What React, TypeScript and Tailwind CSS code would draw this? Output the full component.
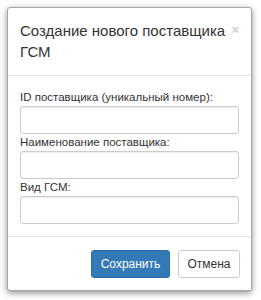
import React from 'react';

const fields = [
  'ID поставщика (уникальный номер):',
  'Наименование поставщика:',
  'Вид ГСМ:',
];

export default function App() {
  return (
    <div
      className="w-[261px] h-[300px] bg-white pt-[7px] pl-[7px]"
      style={{ fontFamily: '"Liberation Sans", Arial, sans-serif' }}
    >
      <div className="w-[245px] h-[284px] bg-white border border-[#a8a8a8] rounded-[3px] shadow-[0_2px_6px_rgba(0,0,0,0.45)] flex flex-col">
        <div className="relative pl-[12px] pr-[22px] pt-[12px] pb-[13px] border-b border-[#e5e5e5]">
          <h1 className="text-[15px] leading-[21px] text-[#333] font-normal">
            Создание нового поставщика ГСМ
          </h1>
          <span className="absolute right-[12px] top-[15px] text-[#cfcfcf] text-[13px] leading-[13px] font-bold">×</span>
        </div>

        <div className="px-[12px] pt-[14px] pb-[12px] flex flex-col gap-[1px] border-b border-[#e5e5e5]">
          {fields.map((label) => (
            <div key={label} className="flex flex-col">
              <label className="text-[11.5px] leading-[15px] text-[#333] mb-[1px]">{label}</label>
              <input
                type="text"
                className="h-[28px] w-full border border-[#ccc] rounded-[3px] shadow-[inset_0_1px_1px_rgba(0,0,0,0.075)]"
              />
            </div>
          ))}
        </div>

        <div className="flex justify-end gap-[8px] px-[11px] pt-[13px]">
          <button className="h-[28px] w-[79px] bg-[#337ab7] border border-[#2e6da4] rounded-[3px] text-white text-[12px]">
            Сохранить
          </button>
          <button className="h-[28px] w-[62px] bg-white border border-[#ccc] rounded-[3px] text-[#333] text-[12px]">
            Отмена
          </button>
        </div>
      </div>
    </div>
  );
}
